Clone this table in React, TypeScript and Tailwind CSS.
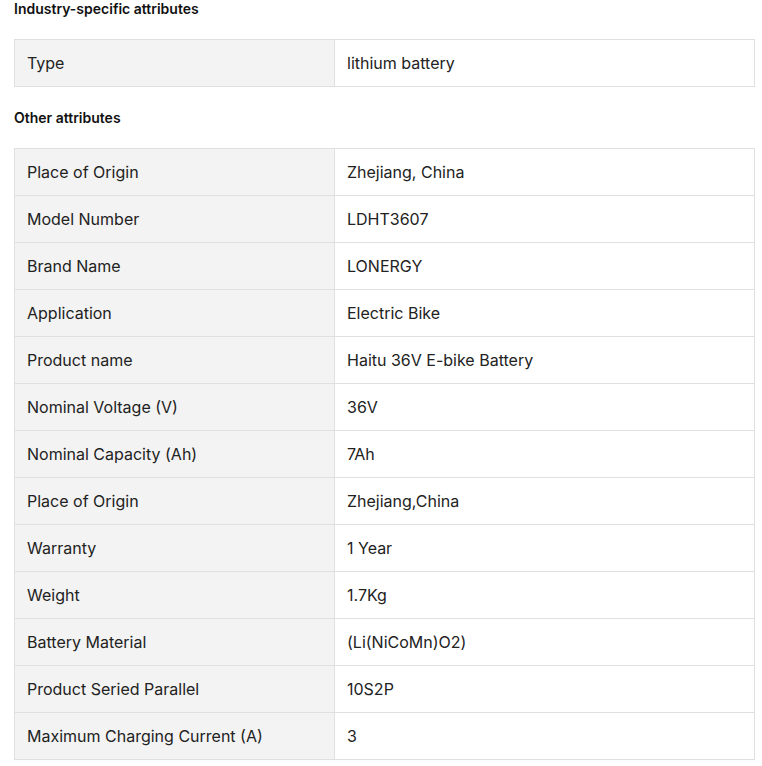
const industry = [{ label: 'Type', value: 'lithium battery' }]

const other = [
  { label: 'Place of Origin', value: 'Zhejiang, China' },
  { label: 'Model Number', value: 'LDHT3607' },
  { label: 'Brand Name', value: 'LONERGY' },
  { label: 'Application', value: 'Electric Bike' },
  { label: 'Product name', value: 'Haitu 36V E-bike Battery' },
  { label: 'Nominal Voltage (V)', value: '36V' },
  { label: 'Nominal Capacity (Ah)', value: '7Ah' },
  { label: 'Place of Origin', value: 'Zhejiang,China' },
  { label: 'Warranty', value: '1 Year' },
  { label: 'Weight', value: '1.7Kg' },
  { label: 'Battery Material', value: '(Li(NiCoMn)O2)' },
  { label: 'Product Seried Parallel', value: '10S2P' },
  { label: 'Maximum Charging Current (A)', value: '3' },
]

function AttrTable({ rows }: { rows: { label: string; value: string }[] }) {
  return (
    <div className="w-[741px] border border-[#e0e0e0]">
      {rows.map((row, i) => (
        <div
          key={i}
          className={`flex ${i < rows.length - 1 ? 'h-[47px] border-b border-[#e0e0e0]' : 'h-[46px]'}`}
        >
          <div className="flex w-[320px] items-center border-r border-[#e0e0e0] bg-[#f3f3f3] px-3 text-[16px] text-[#222]">
            {row.label}
          </div>
          <div className="flex flex-1 items-center px-3 text-[16px] text-[#222]">{row.value}</div>
        </div>
      ))}
    </div>
  )
}

export default function App() {
  return (
    <div className="min-h-[766px] bg-white pl-[14px] font-['Inter','Liberation_Sans',sans-serif]">
      <h3 className="h-[18px] text-[14px] font-semibold leading-[18px] text-[#111]">
        Industry-specific attributes
      </h3>
      <div className="mt-[21px]">
        <AttrTable rows={industry} />
      </div>
      <h3 className="mt-[22px] h-[18px] text-[14px] font-semibold leading-[18px] text-[#111]">
        Other attributes
      </h3>
      <div className="mt-[21px]">
        <AttrTable rows={other} />
      </div>
    </div>
  )
}
